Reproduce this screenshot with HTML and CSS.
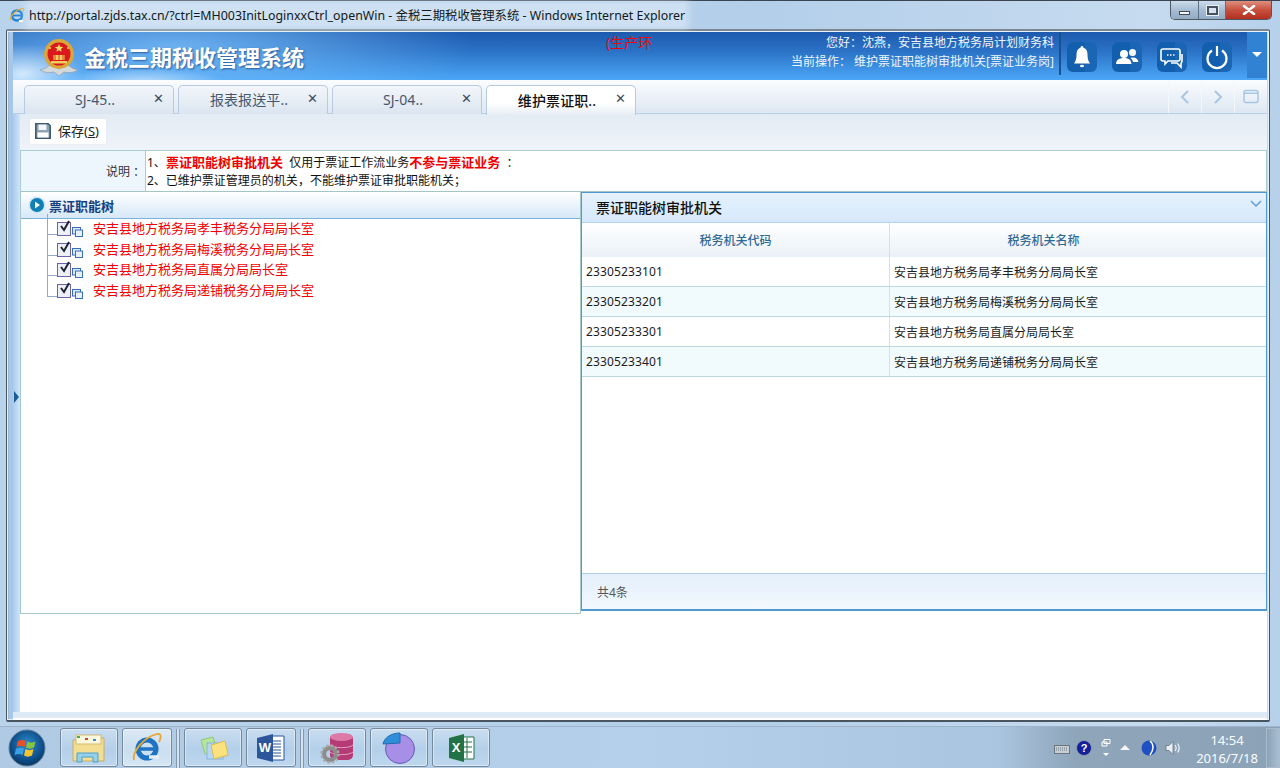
FILE: index.html
```html
<!DOCTYPE html>
<html lang="zh">
<head>
<meta charset="utf-8">
<title>金税三期税收管理系统</title>
<link rel="stylesheet" href="styles.css">
</head>
<body>
<div class="desktop">
  <div class="titlebar">
    <svg class="ie-small" viewBox="0 0 16 16" width="16" height="16"><circle cx="8" cy="8.500" r="5" fill="none" stroke="#1f82d8" stroke-width="2.400"/><path d="M3.500 8.500h9" stroke="#1f82d8" stroke-width="1.800"/><path d="M10 14h4" stroke="#fff" stroke-width="2"/><path d="M1.500 13C1 9 6 3 13 1.500c2-.3 2 1.500 1 3" fill="none" stroke="#e8a92c" stroke-width="1.200"/></svg>
    <div class="title-text">http://portal.zjds.tax.cn/?ctrl=MH003InitLoginxxCtrl_openWin - 金税三期税收管理系统 - Windows Internet Explorer</div>
    <div class="winctl">
      <div class="wc wc-min"><i></i></div>
      <div class="wc wc-max"><i></i></div>
      <div class="wc wc-close">
        <svg viewBox="0 0 14 10" width="14" height="10"><path d="M2 1l10 8M12 1L2 9" stroke="#fff" stroke-width="2.600" stroke-linecap="round"/></svg>
      </div>
    </div>
  </div>

  <div class="window">
    <header class="hdr">
      <div class="brand">
        <svg class="emblem" viewBox="0 0 38 38" width="38" height="38">
          <path d="M0 31c5-1 8-3 11-6l8 5 8-5c3 3 6 5 11 6-5 3-10 3-14 2l-5 4-5-4c-4 1-9 1-14-2z" fill="#d3d8da" stroke="#8c989e" stroke-width=".6"/>
          <circle cx="19" cy="15" r="15" fill="#d8a63a"/>
          <circle cx="19" cy="15" r="11.500" fill="#d9191c"/>
          <path d="M11 22h16v2.500H11zM13.500 16h11v5h-11z" fill="#f2cf58"/>
          <path d="M15 16v5M19 16v5M23 16v5" stroke="#d9191c" stroke-width=".8"/>
          <path d="M19 5l1.200 2.800 3 .2-2.300 1.900.8 2.900-2.700-1.600-2.600 1.600.8-2.900L14.900 8l3-.2z" fill="#f6dc6c"/>
          <circle cx="10" cy="9" r="1" fill="#f6dc6c"/><circle cx="28" cy="9" r="1" fill="#f6dc6c"/>
        </svg>
        <div class="brand-name">金税三期税收管理系统</div>
      </div>
      <div class="env">(生产环</div>
      <div class="userinfo">
        <div>您好<span class="pc">：</span>沈燕<span class="pc">，</span>安吉县地方税务局计划财务科</div>
        <div>当前操作<span class="pc">：</span> 维护票证职能树审批机关[票证业务岗]</div>
      </div>
      <div class="hdr-sep"></div>
      <div class="hdr-icons">
        <div class="hi"><svg viewBox="0 0 30 30" width="30" height="30"><path d="M15 4c1 0 1.500.8 1.500 1.800 3 1 4 3.500 4 7 0 4 .8 6.500 2.500 8.700H7c1.700-2.200 2.500-4.700 2.500-8.700 0-3.500 1-6 4-7C13.500 4.800 14 4 15 4z" fill="#fff"/><ellipse cx="15" cy="24" rx="2" ry="1.300" fill="#fff"/></svg></div>
        <div class="hi"><svg viewBox="0 0 30 30" width="30" height="30"><circle cx="12" cy="12" r="4" fill="#fff"/><circle cx="20.500" cy="10.500" r="3.500" fill="#fff"/><path d="M4 22c0-4 3-6 8-6s7 2 7.500 6z" fill="#fff"/><path d="M20 15.500c3.500-.5 6 1.500 6.500 4.500H21c-.3-2-1.500-3.200-2.500-4z" fill="#fff"/></svg></div>
        <div class="hi"><svg viewBox="0 0 30 30" width="30" height="30"><path d="M6 7h15a2 2 0 0 1 2 2v8a2 2 0 0 1-2 2H11l-3 3v-3H6a2 2 0 0 1-2-2V9a2 2 0 0 1 2-2z" fill="none" stroke="#fff" stroke-width="1.600"/><path d="M25 12v7l-1 3v3l-4-4h-6" fill="none" stroke="#fff" stroke-width="1.600"/><path d="M10 13h1.500M13 13h1.500M16 13h1.500" stroke="#fff" stroke-width="1.500"/></svg></div>
        <div class="hi"><svg viewBox="0 0 30 30" width="30" height="30"><path d="M10 8.500a9.500 9.500 0 1 0 10 0" fill="none" stroke="#fff" stroke-width="2.200"/><path d="M15 4v10" stroke="#fff" stroke-width="2.200"/></svg></div>
      </div>
      <div class="hdr-drop"><i></i></div>
    </header>

    <nav class="tabs">
      <div class="tab"><span class="tab-label">SJ-45..</span><span class="tab-x">✕</span></div>
      <div class="tab"><span class="tab-label">报表报送平..</span><span class="tab-x">✕</span></div>
      <div class="tab"><span class="tab-label">SJ-04..</span><span class="tab-x">✕</span></div>
      <div class="tab tab-active"><span class="tab-label">维护票证职..</span><span class="tab-x">✕</span></div>
      <div class="tab-nav">
        <div class="tn"><svg viewBox="0 0 12 16" width="12" height="16"><path d="M9 2L3 8l6 6" fill="none" stroke="#a9c6e2" stroke-width="2"/></svg></div>
        <div class="tn"><svg viewBox="0 0 12 16" width="12" height="16"><path d="M3 2l6 6-6 6" fill="none" stroke="#a9c6e2" stroke-width="2"/></svg></div>
        <div class="tn"><svg viewBox="0 0 16 16" width="16" height="16"><rect x="1" y="1.500" width="14" height="12" rx="2" fill="none" stroke="#a9c6e2" stroke-width="1.500"/><path d="M1 3.500h14v1.500H1z" fill="#a9c6e2"/></svg></div>
      </div>
    </nav>

    <div class="work">
      <div class="side-strip"><i></i></div>
      <main class="main">
        <div class="toolbar">
          <div class="save-btn">
            <svg viewBox="0 0 16 16" width="16" height="16"><path d="M.8.800h12.400l2 2v12.400H.8z" fill="#8fa3b3" stroke="#3f5a70" stroke-width="1.600"/><path d="M3.500 1.500h8v5.500h-8z" fill="#f4f7fa"/><path d="M2.500 9.500h11v5h-11z" fill="#fff"/></svg>
            <span>保存(<u>S</u>)</span>
          </div>
        </div>

        <div class="panel-stack">
          <div class="note">
            <div class="note-label">说明<span class="pc">：</span></div>
            <div class="note-body">
              <div>1、<b class="r">票证职能树审批机关</b>&nbsp;&nbsp;仅用于票证工作流业务<b class="r">不参与票证业务</b>&nbsp;&nbsp;<span class="pc">：</span></div>
              <div>2、已维护票证管理员的机关<span class="pc">，</span>不能维护票证审批职能机关<span class="pc">；</span></div>
            </div>
          </div>

          <div class="split">
            <section class="tree-panel">
              <div class="tree-head">
                <svg viewBox="0 0 18 18" width="18" height="18"><circle cx="9" cy="9" r="8.500" fill="#cfe6f2"/><circle cx="9" cy="9" r="7" fill="#0f7fb5"/><path d="M7 5.500L12 9l-5 3.500z" fill="#fff"/></svg>
                <span>票证职能树</span>
              </div>
              <div class="tree-body">
                <div class="node"><i class="tl"></i><span class="chk"><svg viewBox="0 0 14 14" width="14" height="14"><path d="M3 6l3 4 5-9" fill="none" stroke="#1c2430" stroke-width="2"/></svg></span><svg class="org" viewBox="0 0 11 10" width="11" height="10"><rect x=".5" y=".5" width="8" height="6.500" fill="#dbe8f6" stroke="#3a6fb5"/><rect x="3.500" y="3" width="7" height="6.500" fill="#e7f0f9" stroke="#3a6fb5"/></svg><span class="node-text">安吉县地方税务局孝丰税务分局局长室</span></div>
                <div class="node"><i class="tl"></i><span class="chk"><svg viewBox="0 0 14 14" width="14" height="14"><path d="M3 6l3 4 5-9" fill="none" stroke="#1c2430" stroke-width="2"/></svg></span><svg class="org" viewBox="0 0 11 10" width="11" height="10"><rect x=".5" y=".5" width="8" height="6.500" fill="#dbe8f6" stroke="#3a6fb5"/><rect x="3.500" y="3" width="7" height="6.500" fill="#e7f0f9" stroke="#3a6fb5"/></svg><span class="node-text">安吉县地方税务局梅溪税务分局局长室</span></div>
                <div class="node"><i class="tl"></i><span class="chk"><svg viewBox="0 0 14 14" width="14" height="14"><path d="M3 6l3 4 5-9" fill="none" stroke="#1c2430" stroke-width="2"/></svg></span><svg class="org" viewBox="0 0 11 10" width="11" height="10"><rect x=".5" y=".5" width="8" height="6.500" fill="#dbe8f6" stroke="#3a6fb5"/><rect x="3.500" y="3" width="7" height="6.500" fill="#e7f0f9" stroke="#3a6fb5"/></svg><span class="node-text">安吉县地方税务局直属分局局长室</span></div>
                <div class="node"><i class="tl"></i><span class="chk"><svg viewBox="0 0 14 14" width="14" height="14"><path d="M3 6l3 4 5-9" fill="none" stroke="#1c2430" stroke-width="2"/></svg></span><svg class="org" viewBox="0 0 11 10" width="11" height="10"><rect x=".5" y=".5" width="8" height="6.500" fill="#dbe8f6" stroke="#3a6fb5"/><rect x="3.500" y="3" width="7" height="6.500" fill="#e7f0f9" stroke="#3a6fb5"/></svg><span class="node-text">安吉县地方税务局递铺税务分局局长室</span></div>
              </div>
            </section>

            <section class="grid-panel">
              <div class="grid-title">
                <span>票证职能树审批机关</span>
                <svg viewBox="0 0 12 8" width="12" height="8"><path d="M1 1l5 5 5-5" fill="none" stroke="#5ba0d8" stroke-width="1.500"/></svg>
              </div>
              <div class="grid-table">
                <div class="gr gr-head"><div class="gc1">税务机关代码</div><div class="gc2">税务机关名称</div></div>
                <div class="gr"><div class="gc1">23305233101</div><div class="gc2">安吉县地方税务局孝丰税务分局局长室</div></div>
                <div class="gr gr-alt"><div class="gc1">23305233201</div><div class="gc2">安吉县地方税务局梅溪税务分局局长室</div></div>
                <div class="gr"><div class="gc1">23305233301</div><div class="gc2">安吉县地方税务局直属分局局长室</div></div>
                <div class="gr gr-alt"><div class="gc1">23305233401</div><div class="gc2">安吉县地方税务局递铺税务分局局长室</div></div>
              </div>
              <div class="grid-foot">共4条</div>
            </section>
          </div>
        </div>
      </main>
    </div>
    <div class="bottom-strip"></div>
  </div>

  <footer class="taskbar">
    <div class="orb">
      <svg viewBox="0 0 38 38" width="38" height="38">
        <defs><radialGradient id="og" cx=".5" cy=".4" r=".65"><stop offset="0" stop-color="#2f8fcf"/><stop offset=".7" stop-color="#0c4a86"/><stop offset="1" stop-color="#0d2f52"/></radialGradient></defs>
        <circle cx="19" cy="19" r="18" fill="url(#og)" stroke="#5c7f9c"/>
        <path d="M10 12c3-1.500 6-1.500 8 0l-1.500 6c-2-1.500-5-1.500-8 0z" fill="#e8502a"/>
        <path d="M19.500 12.500c2.500 1.500 5 1.500 8 0L26 18.500c-3 1.500-5.500 1.500-8 0z" fill="#86c440"/>
        <path d="M8 19.500c3-1.500 6-1.500 8 0L14.500 26c-2-1.500-5-1.500-8 0z" fill="#3aa0e4"/>
        <path d="M17.500 20c2.500 1.500 5 1.500 8 0L24 26.500c-3 1.500-5.500 1.500-8 0z" fill="#f4c431"/>
      </svg>
    </div>
    <div class="tb-group">
      <div class="tb tb-w58"><svg viewBox="0 0 34 32" width="34" height="32"><path d="M1 8h13l2-2h16v23H1z" fill="#f3dd92" stroke="#c9ae63"/><rect x="4" y="3" width="25" height="9" fill="#fdf7dc" stroke="#cfba78"/><rect x="5" y="4" width="3" height="2" fill="#3cb44a"/><rect x="13" y="6" width="3" height="2" fill="#d9442c"/><rect x="21" y="7" width="3" height="2" fill="#2f8fdc"/><path d="M5 30v-9h21v9h-5v-5H10v5z" fill="#93d0ec" stroke="#4fa0c8"/></svg></div>
      <div class="tb tb-w50 tb-on"><svg viewBox="0 0 32 32" width="32" height="32"><circle cx="16" cy="17" r="9" fill="none" stroke="#1f73c4" stroke-width="5"/><path d="M8 17h17" stroke="#1f73c4" stroke-width="3.500"/><path d="M18 25h10" stroke="#e6f0f8" stroke-width="3.500"/><path d="M3 28C1 21 11 6 26 2c5-1 4 4 2 8" fill="none" stroke="#e8a62c" stroke-width="1.800"/></svg></div>
    </div>
    <div class="tb-sep"></div>
    <div class="tb-group">
      <div class="tb tb-w58"><svg viewBox="0 0 34 30" width="34" height="30"><path d="M5 7l12-3 4 14-12 3z" fill="#b5e59a" stroke="#8fc974"/><rect x="11" y="10" width="16" height="16" fill="#b5d7f4" stroke="#86b5dc"/><path d="M15 12l14-4 3 14-14 4z" fill="#fbe27e" stroke="#d9bc52"/></svg></div>
      <div class="tb tb-w50"><svg class="doc-w" viewBox="0 0 32 32" width="32" height="32"><path d="M14 4h15v24H14z" fill="#fff" stroke="#2b579a"/><path d="M17 9h9M17 12h9M17 15h9M17 18h9M17 21h9M17 24h9" stroke="#2b579a"/><path d="M2 6l16-4v28L2 26z" fill="#2b579a"/><text x="10" y="20" class="doc-letter">W</text></svg></div>
    </div>
    <div class="tb-sep"></div>
    <div class="tb-group">
      <div class="tb tb-w58"><svg viewBox="0 0 34 34" width="34" height="34"><rect x="10" y="3" width="23" height="26" rx="5" fill="#b53a76"/><ellipse cx="21.500" cy="6" rx="11.500" ry="4" fill="#dd7aa6"/><path d="M10 14c3 3.500 20 3.500 23 0M10 21c3 3.500 20 3.500 23 0" fill="none" stroke="#e7a0c0"/><circle cx="10" cy="23" r="6" fill="none" stroke="#8d8d8d" stroke-width="4.500"/><circle cx="10" cy="23" r="8.500" fill="none" stroke="#a8a8a8" stroke-width="2.400" stroke-dasharray="2.500 2"/></svg></div>
      <div class="tb tb-w58"><svg viewBox="0 0 34 34" width="34" height="34"><circle cx="18" cy="18" r="14.500" fill="#a78ee6" stroke="#6c57b8"/><path d="M1 13C2 7 9 2 18 2v10z" fill="#2e8fd8" stroke="#1f6bad"/></svg></div>
      <div class="tb tb-w58"><svg viewBox="0 0 32 32" width="32" height="32"><path d="M15 5h14v22H15z" fill="#fff" stroke="#217346"/><path d="M17 10h10M17 15h10M17 20h10M22 6v20" stroke="#217346"/><path d="M4 6l15-4v28L4 26z" fill="#217346"/><text x="11" y="20" class="doc-letter">X</text></svg></div>
    </div>
    <div class="tray">
      <svg viewBox="0 0 16 12" width="16" height="12"><rect x=".5" y="3.500" width="15" height="8" fill="#c9ced3" stroke="#6b7680"/><path d="M2 6h12M2 8h12" stroke="#6b7680" stroke-dasharray="1 1"/></svg>
      <div class="help">?</div>
      <div class="tray-flag"><svg viewBox="0 0 10 8" width="10" height="8"><path d="M3 .5h6v4H3zM1 3h5v4H1z" fill="none" stroke="#fff"/></svg><i></i></div>
      <i class="tray-up"></i>
      <svg class="ball" viewBox="0 0 16 16" width="16" height="16"><circle cx="8" cy="8" r="7.500" fill="#1f4fc0"/><path d="M9 1c4 3 4 9 0 14" fill="none" stroke="#fff" stroke-width="1.500"/></svg>
      <svg class="spk" viewBox="0 0 17 16" width="17" height="16"><path d="M1 5.500h3l4-4v13l-4-4H1z" fill="#e8edf1" stroke="#5d6b77" stroke-width=".7"/><path d="M10 5c1.500 2 1.500 4 0 6M12.500 3.500c2.300 3 2.300 6 0 9" fill="none" stroke="#eef2f5" stroke-width="1.200"/></svg>
      <div class="clock"><div>14:54</div><div>2016/7/18</div></div>
      <div class="show-desk"></div>
    </div>
  </footer>
</div>
</body>
</html>
```

FILE: styles.css
```css
* { box-sizing: border-box; }
html, body { margin: 0; padding: 0; }
body {
  width: 1280px;
  height: 768px;
  overflow: hidden;
  font-family: "Noto Sans", "Noto Sans CJK SC", sans-serif;
  font-size: 12px;
  color: #1c1c1c;
}
.desktop {
  width: 1280px;
  height: 768px;
  display: flex;
  flex-direction: column;
  background: linear-gradient(90deg, #b9d3ec 0%, #b4cfea 60%, #c6dbef 90%, #b6d0ea 100%);
}
.pc { font-family: "Noto Sans CJK TC", sans-serif; }

/* Title bar */
.titlebar {
  height: 29px;
  flex: none;
  display: flex;
  align-items: center;
  padding: 0 8px 0 9px;
  border-top: 1px solid #3c4450;
  position: relative;
}
.ie-small { flex: none; margin-right: 4px; }
.title-text {
  font-size: 12.390px;
  color: #111a22;
  white-space: nowrap;
  padding: 2px 0 2px;
  background: rgba(225, 236, 247, .55);
  box-shadow: 0 0 8px 4px rgba(225, 236, 247, .55);
}
.winctl {
  position: absolute;
  right: 8px;
  top: 0;
  display: flex;
  height: 19px;
  border: 1px solid #4c5866;
  border-top: none;
  border-radius: 0 0 5px 5px;
  overflow: hidden;
}
.wc { display: flex; align-items: center; justify-content: center; height: 18px; }
.wc-min { width: 28px; background: linear-gradient(#ccdcec, #a6bdd4 50%, #92abc3); border-right: 1px solid #5e6f80; }
.wc-min i { width: 11px; height: 4px; margin-top: 6px; background: #f4f7fa; border: 1px solid #3f4b57; }
.wc-max { width: 27px; background: linear-gradient(#ccdcec, #a6bdd4 50%, #92abc3); border-right: 1px solid #5e6f80; }
.wc-max i { width: 11px; height: 9px; border: 2px solid #46525e; background: #d5e2ee; box-shadow: 0 0 0 1px #e8f0f6; }
.wc-close { width: 45px; background: linear-gradient(#dd8f80, #c8503f 50%, #b22f1e); }

/* Window */
.window {
  flex: none;
  height: 693px;
  margin: 0 10px 4px 6px;
  padding: 1px 2px 0 6px;
  display: flex;
  flex-direction: column;
  border: 1px solid #4b5560;
  border-top: 2px solid #7d8791;
  border-bottom: 2px solid #4b5560;
  border-radius: 2px;
  background: linear-gradient(90deg, #7a8794 0, #a6c7e8 2px, #c1daf2 100%);
  box-shadow: inset 0 0 0 1px #e8f2fb;
}

/* Header */
.hdr {
  height: 48px;
  flex: none;
  display: flex;
  position: relative;
  color: #fff;
  background:
    radial-gradient(ellipse 60px 30px at 10px 42px, rgba(255,255,255,.75), rgba(255,255,255,0)),
    radial-gradient(ellipse 80px 14px at 130px 50px, rgba(255,255,255,.55), rgba(255,255,255,0)),
    radial-gradient(ellipse 300px 70px at 160px 16px, rgba(120,190,250,.85), rgba(120,190,250,0)),
    linear-gradient(#1d5aae, #2b72c6 40%, #4ba7f8);
}
.brand { width: 593px; flex: none; display: flex; align-items: center; padding-left: 27px; }
.emblem { flex: none; margin-right: 6px; margin-top: 3px; }
.brand-name {
  font-size: 22px;
  font-weight: 700;
  white-space: nowrap;
  text-shadow: 1px 1px 2px rgba(20, 60, 120, .7);
}
.env {
  width: 60px;
  flex: none;
  padding-top: 2px;
  font-size: 14px;
  line-height: 18px;
  color: #f0060e;
  white-space: nowrap;
}
.userinfo {
  flex: 1;
  padding-top: 1px;
  text-align: right;
  font-size: 12px;
  line-height: 18px;
  white-space: nowrap;
  color: #eef5fc;
}
.hdr-sep { width: 2px; height: 43px; margin-left: 5px; flex: none; background: #17528f; }
.hdr-icons { display: flex; gap: 15px; padding: 10px 0 0 6px; flex: none; }
.hi {
  width: 30px;
  height: 30px;
  border-radius: 6px;
  background: linear-gradient(90deg, #115fad 60%, #1a66b4 60%);
}
.hi svg { display: block; }
.hdr-drop {
  width: 20px;
  height: 46px;
  margin-left: 15px;
  flex: none;
  display: flex;
  align-items: center;
  justify-content: center;
  background: #3182d2;
}
.hdr-drop i { border: 5px solid transparent; border-top: 5px solid #fff; border-bottom: 0; margin-top: -1px; width: 0; }

/* Tabs */
.tabs {
  height: 34px;
  flex: none;
  display: flex;
  gap: 4px;
  padding: 5px 0 0 11px;
  background: linear-gradient(#fbfcfe, #e0e9f3 90%);
  border-bottom: 1px solid #b8d0e6;
}
.tab {
  width: 150px;
  height: 29px;
  display: flex;
  align-items: center;
  border: 1px solid #b6cbe1;
  border-bottom: none;
  border-radius: 5px 5px 0 0;
  background: linear-gradient(#f3f6fb, #dbe5f0);
  color: #47586e;
  font-size: 14px;
  position: relative;
}
.tab-label { flex: 1; text-align: center; padding: 0 8px 2px 0; white-space: nowrap; letter-spacing: .1px; }
.tab-x { position: absolute; right: 9px; top: 5px; font-size: 13px; font-weight: 700; color: #3c4a5e; font-family: "DejaVu Sans", sans-serif; }
.tab-active {
  height: 30px;
  background: linear-gradient(#ffffff, #ffffff 60%, #e6edf5);
  color: #111;
  font-weight: 500;
}
.tab-nav { margin-left: auto; display: flex; margin-top: -5px; height: 33px; }
.tn {
  width: 33px;
  display: flex;
  align-items: center;
  justify-content: center;
  border-left: 1px solid #f4f8fc;
}

/* Work area */
.work { flex: 1; display: flex; min-height: 0; background: #fff; }
.side-strip {
  width: 7px;
  flex: none;
  display: flex;
  align-items: center;
  justify-content: center;
  background: linear-gradient(90deg, #a9cbec, #cfe5fb);
}
.side-strip i { width: 0; border: 6px solid transparent; border-left: 5px solid #1b5c9b; border-right: 0; margin-top: -32px; }
.main { flex: 1; min-width: 0; display: flex; flex-direction: column; }
.toolbar {
  height: 36px;
  flex: none;
  padding: 5px 0 0 10px;
  background: linear-gradient(#e3ebf4, #eff4fa);
}
.save-btn {
  width: 76px;
  height: 25px;
  display: flex;
  align-items: center;
  gap: 7px;
  padding: 0 0 2px 5px;
  background: #fff;
  border-radius: 2px;
  box-shadow: 0 0 2px #dfe8f1;
  white-space: nowrap;
  color: #222;
  font-size: 13px;
}
.panel-stack { flex: 1; background: #fff; }
.note {
  height: 42px;
  display: flex;
  border: 1px solid #a9cdd0;
  border-bottom-color: #a3c6c4;
}
.note-label {
  width: 125px;
  flex: none;
  display: flex;
  align-items: center;
  justify-content: flex-end;
  padding-right: 3px;
  background: #eef6fd;
  border-right: 1px solid #a9cdd0;
  color: #333;
}
.note-body { padding: 3px 0 0 1px; line-height: 16.500px; font-size: 12px; color: #111; }
.note-body .r { color: #f00000; font-size: 13px; }

.split { display: flex; height: 422px; align-items: flex-start; }
.tree-panel {
  width: 561px;
  height: 422px;
  flex: none;
  border: 1px solid #a6c9c9;
  border-top: none;
}
.tree-head {
  height: 27px;
  display: flex;
  align-items: center;
  gap: 3px;
  padding-left: 7px;
  border-bottom: 1px solid #7bb4d6;
  background: linear-gradient(#ffffff, #d6e8f8);
  color: #16407e;
  font-size: 13px;
  font-weight: 700;
}
.tree-body { padding-top: 2px; }
.node {
  height: 20.500px;
  display: flex;
  align-items: flex-start;
  padding-left: 26px;
}
.tl {
  width: 10px;
  height: 21px;
  margin-top: -7px;
  flex: none;
  border-left: 1px solid #93a9c4;
  border-bottom: 1px solid #93a9c4;
}
.chk {
  width: 14px;
  height: 14px;
  margin-top: 1px;
  flex: none;
  border: 1px solid #6a63a8;
  background: #eeeff4;
  position: relative;
}
.chk svg { position: absolute; left: 0; top: -3px; }
.org { flex: none; margin: 6px 0 0 1px; }
.node-text { margin-left: 10px; font-size: 13px; line-height: 15px; color: #f20000; white-space: nowrap; }

.grid-panel {
  flex: 1;
  min-width: 0;
  height: 419px;
  display: flex;
  flex-direction: column;
  border: 1px solid #5098d2;
  border-bottom-width: 2px;
}
.grid-title {
  height: 30px;
  flex: none;
  display: flex;
  align-items: center;
  justify-content: space-between;
  padding: 0 4px 2px 14px;
  background: linear-gradient(#e6f2fe, #d5e8fb);
  border-bottom: 1px solid #b3d3ec;
  font-size: 14px;
  font-weight: 500;
  color: #111;
}
.grid-title svg { margin-bottom: 6px; }
.grid-table { flex: 1; }
.gr { display: flex; height: 30px; border-bottom: 1px solid #bcd9df; background: #fff; }
.gr-alt { background: #f1fafd; }
.gr > div { display: flex; align-items: center; padding-left: 4px; white-space: nowrap; }
.gc1 { width: 308px; flex: none; border-right: 1px solid #d3e2e6; font-size: 12px; letter-spacing: .14px; }
.gc2 { flex: 1; font-size: 12px; }
.gr-head {
  height: 34px;
  border-bottom: none;
  background: linear-gradient(#ffffff, #eaf1f7);
  color: #2f6a96;
  font-weight: 500;
}
.gr-head > div { justify-content: center; letter-spacing: 0; padding-left: 0; }
.gr-head .gc2 { flex: none; width: 307px; }
.grid-foot {
  height: 36px;
  flex: none;
  display: flex;
  align-items: center;
  padding-left: 15px;
  background: linear-gradient(#e3effb, #f2f8fe);
  border-top: 1px solid #b3cfe4;
  color: #555;
}
.bottom-strip { height: 8px; flex: none; background: #deeaf6; border-bottom: 2px solid #fff; }

/* Taskbar */
.taskbar {
  flex: 1;
  display: flex;
  align-items: stretch;
  padding-left: 8px;
  border-top: 1px solid #9fb4c8;
  background: linear-gradient(90deg, #b1cae3 0, #b5d0ea 50%, #aac5df 78%, #8ea5ba 84%, #8ba2b7 100%);
}
.orb { width: 38px; flex: none; margin: 2px 14px 0 0; }
.orb svg { display: block; }
.tb-group { display: flex; gap: 4px; flex: none; }
.tb {
  height: 39px;
  margin-top: 1px;
  display: flex;
  align-items: center;
  justify-content: center;
  border: 1px solid #75899c;
  border-radius: 3px;
  background: linear-gradient(#c9ddf0, #b3cfe9 55%, #bed7ee);
  box-shadow: inset 0 0 0 1px rgba(255,255,255,.45);
}
.tb-w58 { width: 58px; }
.tb-w50 { width: 50px; }
.tb-on { background: linear-gradient(#dde9f5, #c9deef 55%, #d6e6f4); }
.doc-letter { font-family: "Liberation Sans", sans-serif; font-weight: 700; font-size: 13px; fill: #fff; text-anchor: middle; }
.tb-sep {
  width: 4px;
  margin: 2px 4px 0 4px;
  flex: none;
  border-left: 1px solid #8299ae;
  border-right: 1px solid #8299ae;
  background: #d2e2f1;
}
.tray {
  margin-left: auto;
  display: flex;
  align-items: center;
  color: #fff;
  font-size: 12px;
}
.help {
  width: 16px;
  height: 16px;
  margin-left: 6px;
  flex: none;
  border-radius: 50%;
  background: #14209c;
  border: 1px solid #8e98a6;
  color: #fff;
  font: 700 11px/14px "Liberation Sans", sans-serif;
  text-align: center;
}
.tray-flag { width: 12px; margin-left: 8px; display: flex; flex-direction: column; align-items: center; gap: 6px; }
.tray-flag i { width: 0; border: 3px solid transparent; border-top: 3px solid #fff; border-bottom: 0; }
.tray-up { width: 0; margin-left: 8px; border: 5px solid transparent; border-bottom: 5px solid #f4f6f8; border-top: 0; }
.ball { margin-left: 11px; }
.spk { margin-left: 8px; }
.clock { width: 76px; margin-left: 7px; text-align: center; line-height: 18px; font-size: 13px; color: #fbfdff; padding-top: 2px; }
.show-desk {
  width: 14px;
  height: 40px;
  flex: none;
  margin-left: 1px;
  border: 1px solid #a9bbcb;
  background: linear-gradient(90deg, #8aa2b8, #a9bfd2);
}
```
